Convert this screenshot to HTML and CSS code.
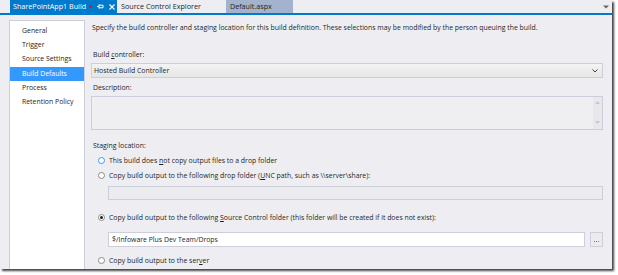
FILE: index.html
```html
<!DOCTYPE html>
<html lang="en">
<head>
    <meta charset="UTF-8">
    <title>SharePointApp1 Build</title>
    <link rel="stylesheet" href="styles.css">
</head>
<body>
    <div class="window">
        <div class="tabs">
            <div class="tab active">
                <span class="tab-title">SharePointApp1 Build</span>
                <span class="dot"></span>
                <svg class="pin" width="7" height="5" viewBox="0 0 7 5"><path d="M0 2.5H2M2 0.5V4.5M2 1.2H6V3.8H2" fill="none" stroke="#fff" stroke-width="1"/></svg>
                <svg class="close" width="6" height="6" viewBox="0 0 6 6"><path d="M0.5 0.5L5.5 5.5M5.5 0.5L0.5 5.5" stroke="#fff" stroke-width="1.1"/></svg>
            </div>
            <div class="tab">Source Control Explorer</div>
            <div class="tab preview">Default.aspx</div>
            <svg class="tabs-menu" width="6" height="4" viewBox="0 0 6 4"><path d="M0 0.5H6L3 3.5Z" fill="#666"/></svg>
        </div>
        <div class="content">
            <ul class="nav">
                <li>General</li>
                <li>Trigger</li>
                <li>Source Settings</li>
                <li class="selected">Build Defaults</li>
                <li>Process</li>
                <li>Retention Policy</li>
            </ul>
            <div class="main">
                <p class="intro">Specify the build controller and staging location for this build definition. These selections may be modified by the person queuing the build.</p>

                <div class="label first">Build <u>c</u>ontroller:</div>
                <div class="select">
                    <span>Hosted Build Controller</span>
                    <svg width="6" height="4" viewBox="0 0 6 4"><path d="M0.5 0.5L3 3L5.5 0.5" fill="none" stroke="#444" stroke-width="1"/></svg>
                </div>

                <div class="label">Description:</div>
                <div class="textarea">
                    <div class="scroll">
                        <svg width="5" height="3" viewBox="0 0 5 3"><path d="M0 3H5L2.5 0Z" fill="#c6c6cc"/></svg>
                        <svg width="5" height="3" viewBox="0 0 5 3"><path d="M0 0H5L2.5 3Z" fill="#c6c6cc"/></svg>
                    </div>
                </div>

                <div class="label staging">Staging location:</div>
                <div class="radio first-radio"><span class="circle focus"></span><span>This build does <u>n</u>ot copy output files to a drop folder</span></div>
                <div class="radio"><span class="circle"></span><span>Copy build output to the following drop folder (<u>U</u>NC path, such as \\server\share):</span></div>
                <div class="field disabled"></div>

                <div class="radio checked-row"><span class="circle checked"></span><span>Copy build output to the following <u>S</u>ource Control folder (this folder will be created if it does not exist):</span></div>
                <div class="field-row">
                    <div class="field">$/Infoware Plus Dev Team/Drops</div>
                    <div class="browse"><span class="b1"></span><span class="b2"></span><span class="b3"></span></div>
                </div>
                <div class="radio last-radio"><span class="circle"></span><span>Copy build output to the ser<u>v</u>er</span></div>
            </div>
        </div>
    </div>
</body>
</html>
```

FILE: styles.css
```css
* {
    margin: 0;
    padding: 0;
    box-sizing: border-box;
}

body {
    width: 618px;
    height: 275px;
    background-color: #ffffff;
    font-family: "Open Sans", "Noto Sans", sans-serif;
    font-size: 6.9px;
    color: #1e1e1e;
    overflow: hidden;
}

.window {
    width: 612px;
    height: 269px;
    background-color: #eeeef2;
    box-shadow: 2px 2px 2px #444;
    display: flex;
    flex-direction: column;
}

/* tab strip */
.tabs {
    display: flex;
    align-items: flex-start;
    height: 15px;
    padding-left: 10px;
    border-bottom: 2px solid #007acc;
    position: relative;
}

.tab {
    height: 13px;
    line-height: 13px;
    font-size: 7.2px;
    color: #1e1e1e;
    white-space: nowrap;
    flex-shrink: 0;
}

.tab.active {
    width: 107px;
    padding-left: 3px;
    margin-right: 4px;
    background-color: #007acc;
    color: #ffffff;
    display: flex;
    align-items: center;
}

.dot {
    width: 3px;
    height: 3px;
    border-radius: 50%;
    background-color: #e51400;
    margin-left: 3px;
    flex-shrink: 0;
}

.pin {
    margin-left: 5px;
    flex-shrink: 0;
}

.close {
    margin-left: 5px;
    flex-shrink: 0;
}

.tab.preview {
    margin-left: 25px;
    width: 67px;
    padding-left: 4px;
    background-color: #a4b3cd;
}

.tabs-menu {
    position: absolute;
    right: 3px;
    top: 5px;
}

/* page body */
.content {
    flex: 1;
    display: flex;
    padding: 5px 9px 0 9px;
}

.nav {
    list-style: none;
    width: 76px;
    background-color: #ffffff;
    border: 1px solid #cccedb;
    border-bottom: none;
    padding-top: 3px;
}

.nav li {
    height: 14.2px;
    line-height: 14.2px;
    padding-left: 12px;
}

.nav li.selected {
    background-color: #3399ff;
    color: #ffffff;
}

.main {
    flex: 1;
    padding-left: 6px;
    padding-top: 2px;
}

.intro {
    height: 12px;
    line-height: 12px;
    padding-left: 1px;
}

.label {
    margin-top: 5px;
    height: 10px;
    line-height: 10px;
    padding-left: 2px;
}

.label.first {
    margin-top: 16px;
}

.label.staging {
    margin-top: 11px;
}

.select {
    margin-top: 3px;
    height: 15px;
    border: 1px solid #cccedb;
    background: linear-gradient(#f3f3f3, #e6e6e6);
    padding: 0 4px 0 2px;
    display: flex;
    align-items: center;
    justify-content: space-between;
}

.textarea {
    margin-top: 3px;
    height: 34px;
    border: 1px solid #cccedb;
    background-color: #efeff1;
    display: flex;
    justify-content: flex-end;
}

.scroll {
    width: 9px;
    display: flex;
    flex-direction: column;
    justify-content: space-between;
    align-items: center;
    background-color: #e8e8ec;
    padding: 4px 0 5px;
}

.radio {
    margin-top: 1px;
    height: 14px;
    display: flex;
    align-items: center;
    padding-left: 7px;
}

.radio.first-radio {
    margin-top: 2px;
}

.radio.checked-row {
    margin-top: 10px;
}

.radio.last-radio {
    margin-top: 6px;
}

.circle {
    width: 7px;
    height: 7px;
    border: 1px solid #8a8a8a;
    border-radius: 50%;
    background-color: #ffffff;
    margin-right: 4px;
    position: relative;
}

.circle.focus {
    border-color: #3399ff;
}

.circle.checked::after {
    content: "";
    position: absolute;
    left: 1px;
    top: 1px;
    width: 3px;
    height: 3px;
    border-radius: 50%;
    background-color: #1e1e1e;
}

.field {
    height: 14px;
    line-height: 12px;
    margin-left: 17px;
    border: 1px solid #cccedb;
    background-color: #ffffff;
    padding-left: 3px;
}

.field.disabled {
    margin-top: 4px;
    background-color: #ececee;
}

.field-row {
    display: flex;
    margin-top: 8px;
}

.field-row .field {
    flex: 1;
    height: 15px;
    line-height: 13px;
}

.browse {
    width: 13px;
    height: 15px;
    margin-left: 5px;
    border: 1px solid #cccedb;
    background-color: #ececee;
    display: flex;
    justify-content: center;
    align-items: center;
    gap: 1px;
    padding-top: 3px;
}

.browse span {
    width: 1px;
    height: 1px;
}

.b1 {
    background-color: #5e6fa8;
}

.b2 {
    background-color: #a85e7a;
}

.b3 {
    background-color: #5e8fa8;
}
```
